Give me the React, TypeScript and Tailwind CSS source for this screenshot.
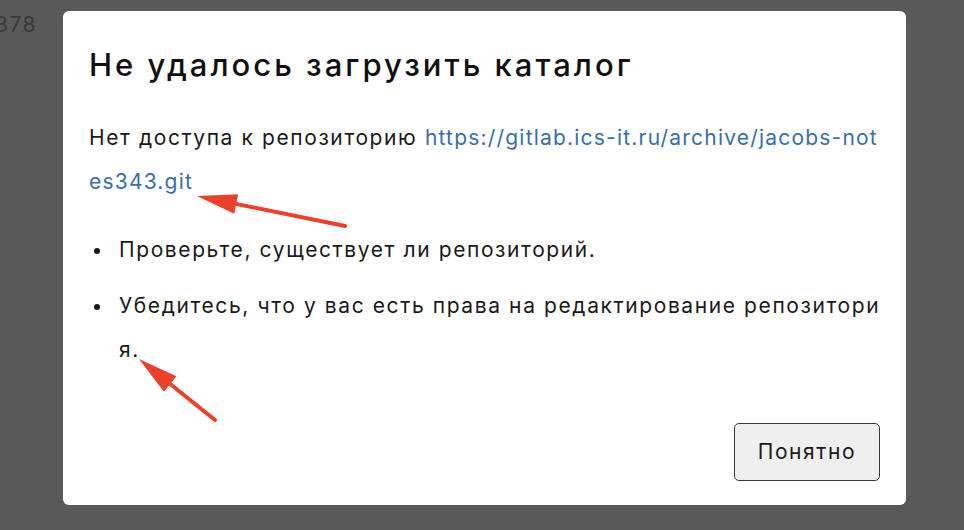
// Диалог ошибки загрузки каталога поверх затемнённой страницы
const font = { fontFamily: 'Inter, "Noto Sans", sans-serif' }

function Arrow({ x1, y1, x2, y2 }: { x1: number; y1: number; x2: number; y2: number }) {
  // стрелка-пометка: от (x1,y1) к острию (x2,y2)
  const dx = x2 - x1
  const dy = y2 - y1
  const len = Math.hypot(dx, dy)
  const ux = dx / len
  const uy = dy / len
  const head = 40
  const half = 10
  const bx = x2 - ux * head
  const by = y2 - uy * head
  const p1 = `${bx - uy * half},${by + ux * half}`
  const p2 = `${bx + uy * half},${by - ux * half}`
  return (
    <g>
      <line x1={x1} y1={y1} x2={bx + ux * 4} y2={by + uy * 4} stroke="#e8412c" strokeWidth="4" strokeLinecap="round" />
      <polygon points={`${x2},${y2} ${p1} ${p2}`} fill="#e8412c" />
    </g>
  )
}

function Bullet({ children }: { children: React.ReactNode }) {
  return (
    <li className="flex">
      <span className="w-[30px] shrink-0 flex items-start pt-[20px] pl-[5px]">
        <span className="w-[6px] h-[6px] rounded-full bg-[#1a1a1a]" />
      </span>
      <span className="flex-1 break-all">{children}</span>
    </li>
  )
}

export default function App() {
  return (
    <div className="relative w-[964px] h-[530px] overflow-hidden bg-[#595959] flex" style={font}>
      <div className="w-[63px] shrink-0 overflow-hidden pt-[9px] flex justify-end">
        <span className="text-[21px] tracking-[1.5px] text-[#3a3a3a] pr-[26px] whitespace-nowrap">378</span>
      </div>

      <div className="mt-[11px] w-[843px] h-[494px] bg-white rounded-[6px] pl-[26px] pr-[20px] pt-[34px] pb-[24px] flex flex-col">
        <h1 className="text-[31px] leading-[40px] tracking-[3px] font-medium text-[#111]">Не удалось загрузить каталог</h1>

        <p className="mt-[31px] text-[21px] leading-[44px] tracking-[1.6px] text-[#1a1a1a] break-all">
          Нет доступа к репозиторию{' '}
          <span className="text-[#3b6ea5] tracking-[1.2px]">https://gitlab.ics-it.ru/archive/jacobs-notes343.git</span>
        </p>

        <ul className="mt-[24px] text-[21px] leading-[44px] tracking-[1.6px] text-[#1a1a1a] flex flex-col gap-[12px]">
          <Bullet>Проверьте, существует ли репозиторий.</Bullet>
          <Bullet>Убедитесь, что у вас есть права на редактирование репозитория.</Bullet>
        </ul>

        <div className="mt-auto flex justify-end pr-[6px]">
          <button className="w-[146px] h-[58px] rounded-[5px] border-[1.5px] border-[#3a3a3a] bg-[#efefef] text-[21px] tracking-[1.6px] text-[#1a1a1a]">
            Понятно
          </button>
        </div>
      </div>

      <svg className="absolute inset-0 pointer-events-none" width="964" height="530">
        <Arrow x1={345} y1={226} x2={197} y2={196} />
        <Arrow x1={215} y1={420} x2={139} y2={359} />
      </svg>
    </div>
  )
}
